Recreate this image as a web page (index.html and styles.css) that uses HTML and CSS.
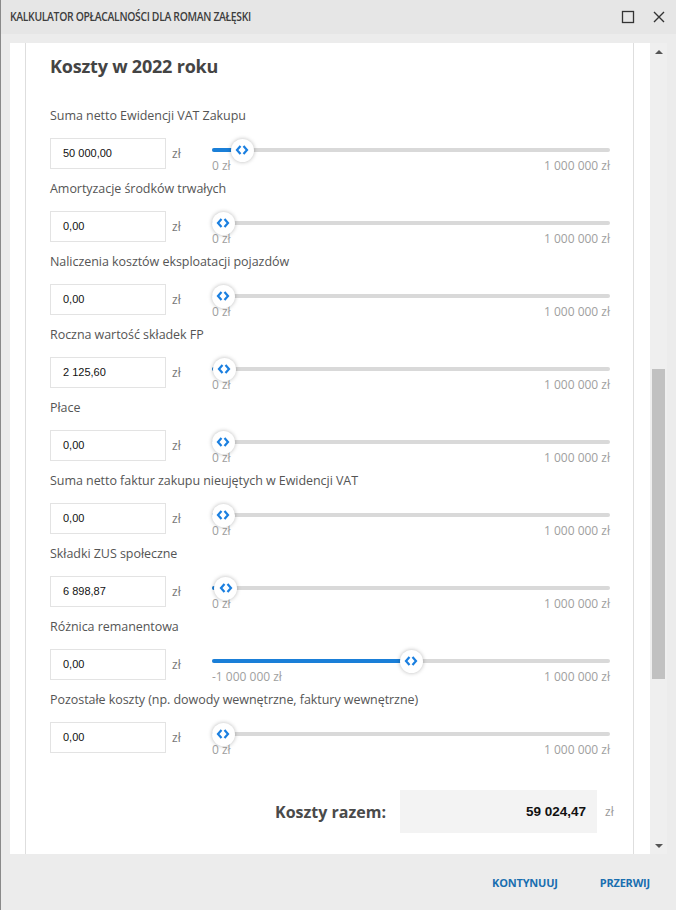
FILE: index.html
```html
<!DOCTYPE html>
<html lang="pl">
<head>
<meta charset="utf-8">
<title>Kalkulator</title>
<link rel="stylesheet" href="styles.css">
</head>
<body>
<div class="window">
  <div class="titlebar">
    <span class="title">KALKULATOR OPŁACALNOŚCI DLA ROMAN ZAŁĘSKI</span>
    <span class="tb-icons">
      <svg width="14" height="14" viewBox="0 0 14 14"><rect x="1.5" y="1.5" width="11" height="11" fill="none" stroke="#333" stroke-width="1.3"/></svg>
      <svg width="14" height="14" viewBox="0 0 14 14"><path d="M2 2 L12 12 M12 2 L2 12" stroke="#333" stroke-width="1.4" fill="none"/></svg>
    </span>
  </div>
  <div class="main">
    <div class="content">
      <div class="card">
        <h2 class="heading">Koszty w 2022 roku</h2>

        <div class="field">
          <div class="label">Suma netto Ewidencji VAT Zakupu</div>
          <div class="row">
            <div class="input">50 000,00</div><span class="unit">zł</span>
            <div class="slider">
              <div class="track"><div class="fill" style="width:30px"></div><div class="thumb" style="left:30px"><svg width="14" height="12" viewBox="0 0 14 12"><path d="M5.5 2 L2 6 L5.5 10 M8.5 2 L12 6 L8.5 10" stroke="#1a7fe0" stroke-width="2.2" fill="none"/></svg></div></div>
              <div class="scale"><span>0 zł</span><span>1 000 000 zł</span></div>
            </div>
          </div>
        </div>

        <div class="field">
          <div class="label">Amortyzacje środków trwałych</div>
          <div class="row">
            <div class="input">0,00</div><span class="unit">zł</span>
            <div class="slider">
              <div class="track"><div class="fill" style="width:11px"></div><div class="thumb" style="left:11px"><svg width="14" height="12" viewBox="0 0 14 12"><path d="M5.5 2 L2 6 L5.5 10 M8.5 2 L12 6 L8.5 10" stroke="#1a7fe0" stroke-width="2.2" fill="none"/></svg></div></div>
              <div class="scale"><span>0 zł</span><span>1 000 000 zł</span></div>
            </div>
          </div>
        </div>

        <div class="field">
          <div class="label">Naliczenia kosztów eksploatacji pojazdów</div>
          <div class="row">
            <div class="input">0,00</div><span class="unit">zł</span>
            <div class="slider">
              <div class="track"><div class="fill" style="width:11px"></div><div class="thumb" style="left:11px"><svg width="14" height="12" viewBox="0 0 14 12"><path d="M5.5 2 L2 6 L5.5 10 M8.5 2 L12 6 L8.5 10" stroke="#1a7fe0" stroke-width="2.2" fill="none"/></svg></div></div>
              <div class="scale"><span>0 zł</span><span>1 000 000 zł</span></div>
            </div>
          </div>
        </div>

        <div class="field">
          <div class="label">Roczna wartość składek FP</div>
          <div class="row">
            <div class="input">2 125,60</div><span class="unit">zł</span>
            <div class="slider">
              <div class="track"><div class="fill" style="width:12px"></div><div class="thumb" style="left:12px"><svg width="14" height="12" viewBox="0 0 14 12"><path d="M5.5 2 L2 6 L5.5 10 M8.5 2 L12 6 L8.5 10" stroke="#1a7fe0" stroke-width="2.2" fill="none"/></svg></div></div>
              <div class="scale"><span>0 zł</span><span>1 000 000 zł</span></div>
            </div>
          </div>
        </div>

        <div class="field">
          <div class="label">Płace</div>
          <div class="row">
            <div class="input">0,00</div><span class="unit">zł</span>
            <div class="slider">
              <div class="track"><div class="fill" style="width:11px"></div><div class="thumb" style="left:11px"><svg width="14" height="12" viewBox="0 0 14 12"><path d="M5.5 2 L2 6 L5.5 10 M8.5 2 L12 6 L8.5 10" stroke="#1a7fe0" stroke-width="2.2" fill="none"/></svg></div></div>
              <div class="scale"><span>0 zł</span><span>1 000 000 zł</span></div>
            </div>
          </div>
        </div>

        <div class="field">
          <div class="label">Suma netto faktur zakupu nieujętych w Ewidencji VAT</div>
          <div class="row">
            <div class="input">0,00</div><span class="unit">zł</span>
            <div class="slider">
              <div class="track"><div class="fill" style="width:11px"></div><div class="thumb" style="left:11px"><svg width="14" height="12" viewBox="0 0 14 12"><path d="M5.5 2 L2 6 L5.5 10 M8.5 2 L12 6 L8.5 10" stroke="#1a7fe0" stroke-width="2.2" fill="none"/></svg></div></div>
              <div class="scale"><span>0 zł</span><span>1 000 000 zł</span></div>
            </div>
          </div>
        </div>

        <div class="field">
          <div class="label">Składki ZUS społeczne</div>
          <div class="row">
            <div class="input">6 898,87</div><span class="unit">zł</span>
            <div class="slider">
              <div class="track"><div class="fill" style="width:13.6px"></div><div class="thumb" style="left:13.6px"><svg width="14" height="12" viewBox="0 0 14 12"><path d="M5.5 2 L2 6 L5.5 10 M8.5 2 L12 6 L8.5 10" stroke="#1a7fe0" stroke-width="2.2" fill="none"/></svg></div></div>
              <div class="scale"><span>0 zł</span><span>1 000 000 zł</span></div>
            </div>
          </div>
        </div>

        <div class="field">
          <div class="label">Różnica remanentowa</div>
          <div class="row">
            <div class="input">0,00</div><span class="unit">zł</span>
            <div class="slider">
              <div class="track"><div class="fill" style="width:199px"></div><div class="thumb" style="left:199px"><svg width="14" height="12" viewBox="0 0 14 12"><path d="M5.5 2 L2 6 L5.5 10 M8.5 2 L12 6 L8.5 10" stroke="#1a7fe0" stroke-width="2.2" fill="none"/></svg></div></div>
              <div class="scale"><span>-1 000 000 zł</span><span>1 000 000 zł</span></div>
            </div>
          </div>
        </div>

        <div class="field">
          <div class="label">Pozostałe koszty (np. dowody wewnętrzne, faktury wewnętrzne)</div>
          <div class="row">
            <div class="input">0,00</div><span class="unit">zł</span>
            <div class="slider">
              <div class="track"><div class="fill" style="width:11px"></div><div class="thumb" style="left:11px"><svg width="14" height="12" viewBox="0 0 14 12"><path d="M5.5 2 L2 6 L5.5 10 M8.5 2 L12 6 L8.5 10" stroke="#1a7fe0" stroke-width="2.2" fill="none"/></svg></div></div>
              <div class="scale"><span>0 zł</span><span>1 000 000 zł</span></div>
            </div>
          </div>
        </div>

        <div class="total">
          <span class="total-label">Koszty razem:</span>
          <div class="total-box">59 024,47</div>
          <span class="total-unit">zł</span>
        </div>
      </div>
    </div>
    <div class="scrollbar">
      <div class="arrow up"></div>
      <div class="sb-track"><div class="sb-thumb"></div></div>
      <div class="arrow down"></div>
    </div>
  </div>
  <div class="footer">
    <span class="btn">KONTYNUUJ</span>
    <span class="btn">PRZERWIJ</span>
  </div>
</div>
</body>
</html>
```

FILE: styles.css
```css
html, body {
  margin: 0;
  padding: 0;
}
body {
  width: 676px;
  height: 910px;
  overflow: hidden;
  background: #ececec;
  font-family: "Open Sans", "Liberation Sans", sans-serif;
}
.window {
  width: 676px;
  height: 910px;
  box-sizing: border-box;
  border-left: 1px solid #8a8a8a;
  display: flex;
  flex-direction: column;
  background: #ececec;
}
.titlebar {
  height: 34px;
  flex: none;
  background: #e6e6e6;
  display: flex;
  align-items: center;
  justify-content: space-between;
  padding: 0 10px 0 9px;
  margin-bottom: 9px;
}
.title {
  display: inline-block;
  font-size: 12.5px;
  font-weight: 600;
  color: #3d3d3d;
  letter-spacing: -0.4px;
  margin-top: -1px;
  transform: scaleX(0.83);
  transform-origin: left center;
  white-space: nowrap;
}
.tb-icons {
  display: flex;
  gap: 17px;
  align-items: center;
  margin-top: -1px;
}
.main {
  height: 811px;
  flex: none;
  display: flex;
  padding-left: 9px;
}
.content {
  width: 640px;
  height: 811px;
  background: #fff;
  overflow: hidden;
  padding-left: 15px;
  box-sizing: border-box;
}
.card {
  width: 609px;
  box-sizing: border-box;
  border-left: 1px solid #dedede;
  border-right: 1px solid #dedede;
  padding: 11px 23px 40px 24px;
  min-height: 811px;
}
.heading {
  margin: 0 0 29px 0;
  font-size: 18px;
  line-height: 24px;
  font-weight: 700;
  color: #444;
  letter-spacing: -0.2px;
}
.field {
  margin-bottom: 11px;
}
.label {
  font-size: 12.5px;
  line-height: 18px;
  color: #555;
  margin-bottom: 13px;
  letter-spacing: -0.05px;
}
.row {
  display: flex;
  height: 31px;
  align-items: flex-start;
}
.input {
  width: 116px;
  height: 31px;
  box-sizing: border-box;
  border: 1px solid #e3e3e3;
  font-family: "Liberation Sans", Arial, sans-serif;
  font-size: 11px;
  line-height: 29px;
  padding-left: 12px;
  color: #111;
  flex: none;
}
.unit {
  width: 46px;
  flex: none;
  font-size: 12px;
  color: #777;
  line-height: 31px;
  padding-left: 6px;
  box-sizing: border-box;
}
.slider {
  width: 398px;
  flex: none;
  display: flex;
  flex-direction: column;
}
.track {
  position: relative;
  margin-top: 10px;
  height: 4px;
  border-radius: 2px;
  background: #d9d9d9;
}
.fill {
  height: 4px;
  border-radius: 2px;
  background: #1a7fd8;
}
.thumb {
  position: absolute;
  top: 2px;
  width: 23px;
  height: 23px;
  margin-left: -11.5px;
  margin-top: -11.5px;
  border-radius: 50%;
  background: #fff;
  box-shadow: 0 0 4px rgba(0,0,0,0.28);
  display: flex;
  align-items: center;
  justify-content: center;
}
.scale {
  display: flex;
  justify-content: space-between;
  font-size: 12px;
  line-height: 16px;
  color: #a0a0a0;
  margin-top: 6px;
}
.total {
  display: flex;
  justify-content: flex-end;
  align-items: center;
  margin-top: 37px;
  margin-right: -11px;
}
.total-label {
  font-size: 16px;
  font-weight: 700;
  color: #4a4a4a;
  margin-right: 14px;
}
.total-box {
  width: 197px;
  height: 43px;
  box-sizing: border-box;
  background: #f3f3f3;
  text-align: right;
  padding-right: 11px;
  font-family: "Liberation Sans", Arial, sans-serif;
  font-weight: 700;
  font-size: 13.5px;
  line-height: 43px;
  color: #111;
}
.total-unit {
  width: 16px;
  padding-left: 8px;
  font-size: 12px;
  color: #999;
}
.scrollbar {
  width: 17px;
  height: 811px;
  background: #efefef;
  display: flex;
  flex-direction: column;
  flex: none;
}
.arrow {
  height: 17px;
  display: flex;
  align-items: center;
  justify-content: center;
}
.arrow.up::before {
  content: "";
  border-left: 4px solid transparent;
  border-right: 4px solid transparent;
  border-bottom: 4px solid #555;
}
.arrow.down::before {
  content: "";
  border-left: 4px solid transparent;
  border-right: 4px solid transparent;
  border-top: 4px solid #555;
}
.sb-track {
  flex: 1;
  position: relative;
  padding-top: 309px;
}
.sb-thumb {
  margin: 0 2px;
  height: 310px;
  background: #c1c1c1;
}
.footer {
  flex: 1;
  background: #ececec;
  display: flex;
  justify-content: flex-end;
  align-items: center;
  gap: 42px;
  padding-right: 26px;
}
.btn {
  font-size: 11px;
  font-weight: 700;
  color: #1a6fb0;
  letter-spacing: -0.2px;
}
```
